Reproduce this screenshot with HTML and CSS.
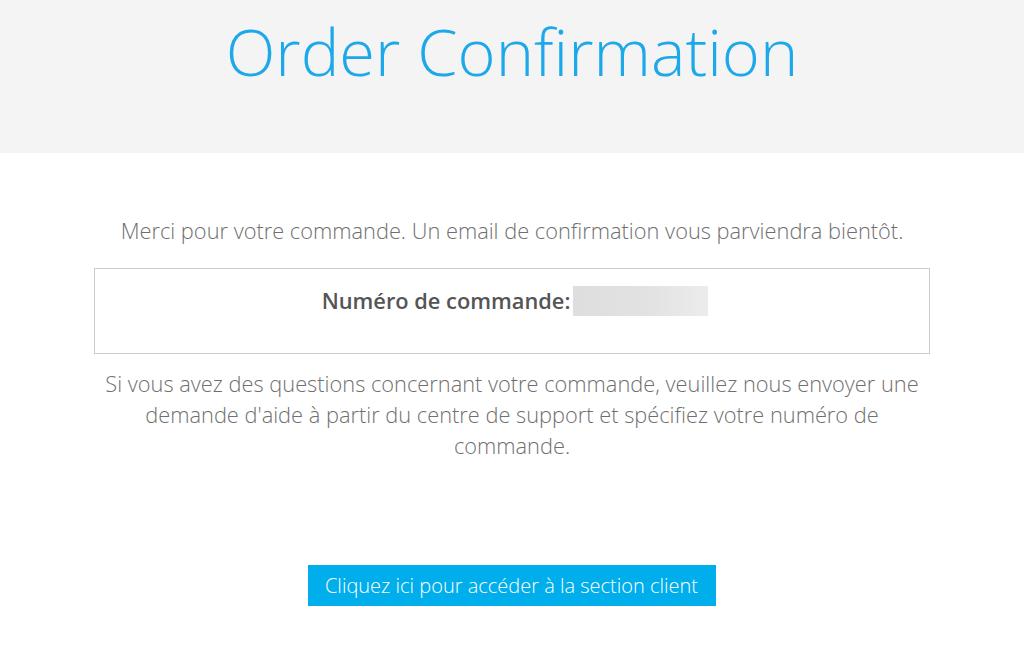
FILE: index.html
```html
<!DOCTYPE html>
<html lang="fr">
<head>
<meta charset="utf-8">
<title>Order Confirmation</title>
<link rel="stylesheet" href="styles.css">
</head>
<body>
<header class="page-header">
  <h1 class="title">Order Confirmation</h1>
</header>
<main class="content">
  <p class="thanks">Merci pour votre commande. Un email de confirmation vous parviendra bientôt.</p>
  <div class="order-box">
    <span class="order-label">Numéro de commande:</span>
    <span class="order-number"></span>
  </div>
  <p class="help">Si vous avez des questions concernant votre commande, veuillez nous envoyer une demande d'aide à partir du centre de support et spécifiez votre numéro de commande.</p>
  <div class="actions">
    <a class="btn" href="#">Cliquez ici pour accéder à la section client</a>
  </div>
</main>
</body>
</html>
```
FILE: styles.css
```css
html, body {
  margin: 0;
  padding: 0;
  background: #fff;
}
body {
  font-family: "Open Sans", "Liberation Sans", sans-serif;
  color: #666;
}
.page-header {
  background: #f4f4f4;
  height: 153px;
  box-sizing: border-box;
  padding-top: 19px;
  display: flex;
  justify-content: center;
  align-items: flex-start;
}
.title {
  margin: 0;
  font-weight: 300;
  font-size: 65px;
  line-height: 65px;
  color: #1ca8e9;
}
.content {
  width: 836px;
  margin: 0 auto;
  display: flex;
  flex-direction: column;
  text-align: center;
}
.thanks {
  margin: 62px 0 0;
  font-weight: 300;
  font-size: 21.8px;
  line-height: 31px;
  color: #6f6f6f;
}
.order-box {
  margin-top: 22px;
  border: 1px solid #ccc;
  height: 86px;
  box-sizing: border-box;
  padding-top: 16px;
  padding-left: 6px;
  display: flex;
  justify-content: center;
  align-items: flex-start;
  gap: 3px;
}
.order-label {
  font-weight: 600;
  font-size: 21.8px;
  line-height: 31px;
  color: #555;
}
.order-number {
  display: block;
  margin-top: 1px;
  width: 135px;
  height: 30px;
  background: linear-gradient(90deg, #dedede 0%, #e2e2e2 55%, #ececec 100%);
}
.help {
  margin: 14px 0 0;
  padding: 0 4px;
  font-weight: 300;
  font-size: 21.8px;
  line-height: 31px;
  color: #6f6f6f;
}
.actions {
  margin-top: 104px;
  display: flex;
  justify-content: center;
  padding-right: 1px;
}
.btn {
  display: block;
  width: 408px;
  background: #00aeec;
  color: #fff;
  text-decoration: none;
  font-weight: 300;
  font-size: 20px;
  line-height: 41px;
  text-align: center;
}
```
